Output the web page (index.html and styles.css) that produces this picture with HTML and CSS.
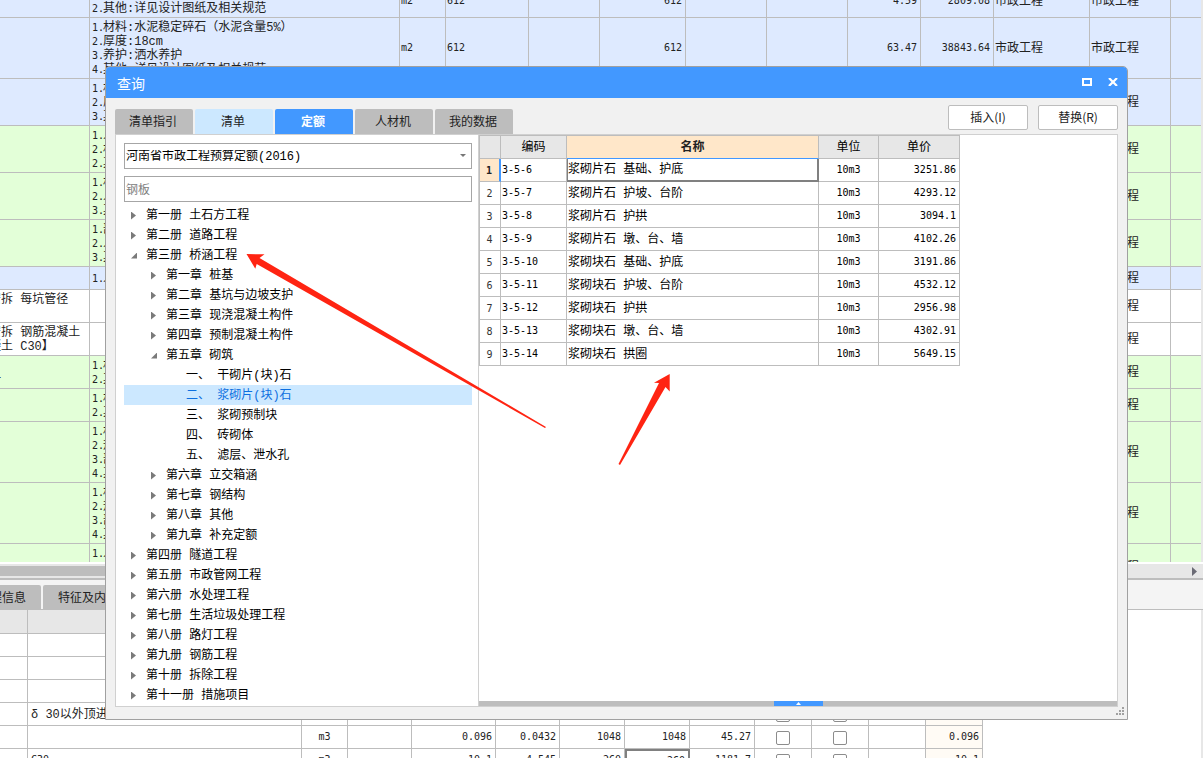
FILE: index.html
```html
<!DOCTYPE html>
<html lang="zh-CN">
<head>
<meta charset="utf-8">
<title>查询</title>
<link rel="stylesheet" href="styles.css">
</head>
<body>
<main class="app">
  <section class="bill-pane">
    <table class="grid bill">
      <colgroup><col class="w-item"><col class="w-feature"><col class="w-unit"><col class="w-83"><col class="w-71"><col class="w-86"><col class="w-81"><col class="w-81"><col class="w-73"><col class="w-73"><col class="w-96"><col class="w-81"><col></colgroup>
      <tbody>
        <tr class="h2 blue"><td></td><td><b>1.</b>厚度:沥青透层<br><b>2.</b>其他:详见设计图纸及相关规范</td><td class="num">m2</td><td class="num">612</td><td></td><td class="num right">612</td><td></td><td></td><td class="num right">4.59</td><td class="num right">2809.08</td><td>市政工程</td><td>市政工程</td><td></td></tr>
        <tr class="h4 blue"><td></td><td><b>1.</b>材料:水泥稳定碎石（水泥含量5%）<br><b>2.</b>厚度:18cm<br><b>3.</b>养护:洒水养护<br><b>4.</b>其他:详见设计图纸及相关规范</td><td class="num">m2</td><td class="num">612</td><td></td><td class="num right">612</td><td></td><td></td><td class="num right">63.47</td><td class="num right">38843.64</td><td>市政工程</td><td>市政工程</td><td></td></tr>
        <tr class="h3 blue"><td></td><td><b>1.</b>材料<br><b>2.</b>厚度<br><b>3.</b>其他</td><td colspan="9"></td><td>市政工程</td><td></td></tr>
        <tr class="h3 green"><td></td><td><b>1.</b>人工<br><b>2.</b>材料<br><b>2.</b>其他</td><td colspan="9"></td><td>市政工程</td><td></td></tr>
        <tr class="h3 green"><td></td><td><b>1.</b>材料<br><b>2.</b>人工<br><b>3.</b>其他</td><td colspan="9"></td><td>市政工程</td><td></td></tr>
        <tr class="h3 green"><td></td><td><b>1.</b>部位<br><b>2.</b>人工<br><b>3.</b>其他</td><td colspan="9"></td><td>市政工程</td><td></td></tr>
        <tr class="h1 blue"><td></td><td><b>1.</b>人工</td><td colspan="9"></td><td>市政工程</td><td></td></tr>
        <tr class="h2"><td class="top">安拆 每坑管径</td><td></td><td colspan="9"></td><td>市政工程</td><td></td></tr>
        <tr class="h2"><td>安拆 钢筋混凝土<br>凝土 C30】</td><td></td><td colspan="9"></td><td>市政工程</td><td></td></tr>
        <tr class="h2 green"><td><br>一</td><td><b>1.</b>材料<br><b>2.</b>其他</td><td colspan="9"></td><td>市政工程</td><td></td></tr>
        <tr class="h2 green"><td></td><td><b>1.</b>材料<br><b>2.</b>其他</td><td colspan="9"></td><td>市政工程</td><td></td></tr>
        <tr class="h4 green"><td></td><td><b>1.</b>材料<br><b>2.</b>规格<br><b>3.</b>部位<br><b>4.</b>其他</td><td colspan="9"></td><td>市政工程</td><td></td></tr>
        <tr class="h4 green"><td></td><td><b>1.</b>材料<br><b>2.</b>规格<br><b>3.</b>部位<br><b>4.</b>其他</td><td colspan="9"></td><td>市政工程</td><td></td></tr>
        <tr class="h3 green"><td></td><td><b>1.</b>人工<br><b>2.</b>材料<br><b>3.</b>其他</td><td colspan="9"></td><td>市政工程</td><td></td></tr>
      </tbody>
    </table>
  </section>
  <div class="hscroll">
    <div class="thumb"></div>
    <svg class="scroll-arrow" viewBox="0 0 5 9" width="5" height="9"><path d="M0 0 5 4.500 0 9Z"/></svg>
  </div>
  <nav class="detail-tabs">
    <button type="button">工程信息</button>
    <button type="button">特征及内容</button>
  </nav>
  <section class="detail-pane">
    <table class="grid detail">
      <colgroup><col class="w-28"><col class="w-274"><col class="w-unit"><col class="w-64"><col class="w-84"><col class="w-64"><col class="w-65"><col class="w-65"><col class="w-65"><col class="w-57"><col class="w-57"><col class="w-57"><col class="w-57"></colgroup>
      <thead><tr><th></th><th></th><th></th><th></th><th></th><th></th><th></th><th></th><th></th><th></th><th></th><th></th><th></th></tr></thead>
      <tbody>
        <tr><td></td><td></td><td colspan="10"></td><td class="tint"></td></tr>
        <tr><td></td><td></td><td colspan="10"></td><td class="tint"></td></tr>
        <tr><td></td><td></td><td colspan="10"></td><td class="tint"></td></tr>
        <tr><td></td><td>δ 30以外顶进后座</td><td></td><td></td><td></td><td></td><td></td><td></td><td></td><td class="mid"><input type="checkbox" aria-label="暂估"></td><td class="mid"><input type="checkbox" aria-label="锁定"></td><td></td><td class="tint"></td></tr>
        <tr><td></td><td></td><td class="num mid">m3</td><td></td><td class="num right">0.096</td><td class="num right">0.0432</td><td class="num right">1048</td><td class="num right">1048</td><td class="num right">45.27</td><td class="mid"><input type="checkbox" aria-label="暂估"></td><td class="mid"><input type="checkbox" aria-label="锁定"></td><td></td><td class="tint num right">0.096</td></tr>
        <tr><td></td><td class="num">C30</td><td class="num mid">m3</td><td></td><td class="num right">10.1</td><td class="num right">4.545</td><td class="num right">260</td><td class="num right picked">260</td><td class="num right">1181.7</td><td class="mid"><input type="checkbox" aria-label="暂估"></td><td class="mid"><input type="checkbox" aria-label="锁定"></td><td></td><td class="tint num right">10.1</td></tr>
      </tbody>
    </table>
  </section>
</main>

<section class="dialog" role="dialog" aria-labelledby="dialog-title">
  <header class="titlebar">
    <h1 id="dialog-title">查询</h1>
    <button type="button" class="win-btn" aria-label="最大化"><svg viewBox="0 0 10 8" width="10" height="8"><path d="M1 1H9V7H1Z" fill="none" stroke="#fff" stroke-width="2"/></svg></button>
    <button type="button" class="win-btn" aria-label="关闭"><svg viewBox="0 0 10 8" width="10" height="8"><path d="M1 0 9 8M9 0 1 8" stroke="#fff" stroke-width="2.200"/></svg></button>
  </header>
  <div class="toolbar">
    <nav class="tabs">
      <button type="button">清单指引</button>
      <button type="button" class="hover">清单</button>
      <button type="button" class="active">定额</button>
      <button type="button">人材机</button>
      <button type="button">我的数据</button>
    </nav>
    <div class="actions">
      <button type="button">插入(I)</button>
      <button type="button">替换(R)</button>
    </div>
  </div>
  <div class="panel">
    <aside class="browser">
      <div class="combo">
        <select class="field" aria-label="定额库"><option>河南省市政工程预算定额(2016)</option></select>
      </div>
      <input class="field search" type="text" placeholder="钢板" aria-label="搜索">
      <ul class="tree">
        <li class="shut">第一册 土石方工程</li>
        <li class="shut">第二册 道路工程</li>
        <li class="open">第三册 桥涵工程</li>
        <li class="shut l2">第一章 桩基</li>
        <li class="shut l2">第二章 基坑与边坡支护</li>
        <li class="shut l2">第三章 现浇混凝土构件</li>
        <li class="shut l2">第四章 预制混凝土构件</li>
        <li class="open l2">第五章 砌筑</li>
        <li class="l3">一、 干砌片(块)石</li>
        <li class="l3 selected">二、 浆砌片(块)石</li>
        <li class="l3">三、 浆砌预制块</li>
        <li class="l3">四、 砖砌体</li>
        <li class="l3">五、 滤层、泄水孔</li>
        <li class="shut l2">第六章 立交箱涵</li>
        <li class="shut l2">第七章 钢结构</li>
        <li class="shut l2">第八章 其他</li>
        <li class="shut l2">第九章 补充定额</li>
        <li class="shut">第四册 隧道工程</li>
        <li class="shut">第五册 市政管网工程</li>
        <li class="shut">第六册 水处理工程</li>
        <li class="shut">第七册 生活垃圾处理工程</li>
        <li class="shut">第八册 路灯工程</li>
        <li class="shut">第九册 钢筋工程</li>
        <li class="shut">第十册 拆除工程</li>
        <li class="shut">第十一册 措施项目</li>
      </ul>
    </aside>
    <div class="results">
      <div class="results-body">
        <table class="grid quota">
          <colgroup><col class="w-22"><col class="w-66"><col class="w-252"><col class="w-60"><col class="w-81"></colgroup>
          <thead><tr><th></th><th>编码</th><th class="current">名称</th><th>单位</th><th>单价</th></tr></thead>
          <tbody>
            <tr><th class="current">1</th><td class="num">3-5-6</td><td class="cell-focus">浆砌片石 基础、护底</td><td class="num mid">10m3</td><td class="num right">3251.86</td></tr>
            <tr><th>2</th><td class="num">3-5-7</td><td>浆砌片石 护坡、台阶</td><td class="num mid">10m3</td><td class="num right">4293.12</td></tr>
            <tr><th>3</th><td class="num">3-5-8</td><td>浆砌片石 护拱</td><td class="num mid">10m3</td><td class="num right">3094.1</td></tr>
            <tr><th>4</th><td class="num">3-5-9</td><td>浆砌片石 墩、台、墙</td><td class="num mid">10m3</td><td class="num right">4102.26</td></tr>
            <tr><th>5</th><td class="num">3-5-10</td><td>浆砌块石 基础、护底</td><td class="num mid">10m3</td><td class="num right">3191.86</td></tr>
            <tr><th>6</th><td class="num">3-5-11</td><td>浆砌块石 护坡、台阶</td><td class="num mid">10m3</td><td class="num right">4532.12</td></tr>
            <tr><th>7</th><td class="num">3-5-12</td><td>浆砌块石 护拱</td><td class="num mid">10m3</td><td class="num right">2956.98</td></tr>
            <tr><th>8</th><td class="num">3-5-13</td><td>浆砌块石 墩、台、墙</td><td class="num mid">10m3</td><td class="num right">4302.91</td></tr>
            <tr><th>9</th><td class="num">3-5-14</td><td>浆砌块石 拱圈</td><td class="num mid">10m3</td><td class="num right">5649.15</td></tr>
          </tbody>
        </table>
      </div>
      <div class="splitter"><button type="button" aria-label="展开"><svg viewBox="0 0 5 3" width="5" height="3"><path d="M0 3 2.500 0 5 3Z" fill="#fff"/></svg></button></div>
    </div>
  </div>
  <svg class="grip" viewBox="0 0 8 8" width="8" height="8"><path d="M6 0h2v2H6zM3 3h2v2H3zM6 3h2v2H6zM0 6h2v2H0zM3 6h2v2H3zM6 6h2v2H6z"/></svg>
</section>

<svg class="arrows" viewBox="0 0 1203 758" width="1203" height="758" aria-hidden="true">
  <path d="M246.500 254 264.500 254.300 259.500 258 546 427 545 428 256.700 264 255.300 268.700Z"/>
  <path d="M669.700 374 654 382.700 659 383 618.500 464 620 465 665.500 387 669.700 391.500Z"/>
</svg>
</body>
</html>
```

FILE: styles.css
```css
* { box-sizing: border-box; }

body {
  margin: 0;
  height: 100vh;
  overflow: hidden;
  background: #fff;
  color: #222;
  font: 12px/14px "Liberation Mono", "Noto Sans CJK SC", monospace;
}

button, input, select { font: inherit; color: inherit; }

.app {
  display: flex;
  flex-direction: column;
  height: 100vh;
  overflow: hidden;
}

/* shared grid look */
.grid {
  table-layout: fixed;
  border-collapse: separate;
  border-spacing: 0;
}
.grid td, .grid th {
  padding: 1px 1px 0;
  border-right: 1px solid #bdbdbd;
  border-bottom: 1px solid #bdbdbd;
  white-space: nowrap;
  overflow: hidden;
  font-weight: normal;
  text-align: left;
}
.grid th { background: #e7e7e7; text-align: center; padding-top: 2px; }
.grid .num, .grid b { font-family: "DejaVu Sans Mono", monospace; font-size: 10px; font-weight: normal; }
.grid .num { padding-top: 0; }
.grid .right { text-align: right; padding-right: 3px; }
.grid .mid { text-align: center; }
.grid .top { vertical-align: top; padding-top: 3px; }

.w-22 { width: 22px; }
.w-28 { width: 28px; }
.w-unit { width: 46px; }
.w-57 { width: 57px; }
.w-60 { width: 60px; }
.w-64 { width: 64px; }
.w-65 { width: 65px; }
.w-66 { width: 66px; }
.w-71 { width: 71px; }
.w-73 { width: 73px; }
.w-81 { width: 81px; }
.w-83 { width: 83px; }
.w-84 { width: 84px; }
.w-86 { width: 86px; }
.w-96 { width: 96px; }
.w-item { width: 102px; }
.w-252 { width: 252px; }
.w-274 { width: 274px; }
.w-feature { width: 310px; }

/* bill of quantities, scrolled slightly down and right */
.bill-pane {
  height: 562px;
  flex: none;
  overflow: hidden;
  border-right: 2px solid #e7e7e7;
}
.bill { width: calc(100% + 12px); margin: -15px 0 0 -12px; }
.bill td:last-child { border-right: 0; }
.h1 { height: 23px; }
.h2 { height: 33px; }
.h3 { height: 47px; }
.h4 { height: 61px; }
.blue { background: #deeaff; }
.green { background: #e3ffd8; }
.grid b { display: inline-block; width: 12px; padding-left: 1px; vertical-align: top; }

.hscroll {
  display: flex;
  align-items: center;
  justify-content: space-between;
  flex: none;
  height: 18px;
  padding-right: 6px;
  border-top: 2px solid #fff;
  border-bottom: 2px solid #bdbdbd;
  background: #e7e7e7;
}
.thumb { width: 60%; height: 10px; background: #bdbdbd; }
.scroll-arrow { fill: #6b6b75; }

.detail-tabs {
  display: flex;
  gap: 2px;
  flex: none;
  height: 30px;
  padding-top: 5px;
  background: #f4f4f4;
  border-bottom: 1px solid #bdbdbd;
}
.detail-tabs button {
  border: 0;
  background: #bdbdbd;
  border-radius: 2px 2px 0 0;
  padding: 4px 15px 0;
}
.detail-tabs button:first-child { margin-left: -37px; }

.detail-pane {
  flex: 1;
  overflow: hidden;
  border-right: 2px solid #e7e7e7;
}
.detail { width: 983px; }
.detail tr { height: 23px; }
.detail tr:first-child th { height: 24px; }
.detail td:nth-child(2) { padding-left: 3px; }
.detail .tint { background: #fffbf5; }
.detail .picked { border: 2px solid #808080; }
.detail input {
  appearance: none;
  display: block;
  width: 14px;
  height: 14px;
  margin: 0 auto;
  border: 1px solid #8c8c8c;
  border-radius: 2px;
  background: #fff;
}

/* floating query window */
.dialog {
  position: absolute;
  top: 66px;
  right: 75px;
  bottom: 38px;
  left: 105px;
  display: flex;
  flex-direction: column;
  padding: 0 9px 12px;
  border: 1px solid #a0a0a0;
  border-radius: 5px 5px 0 0;
  background: #f1f1f1;
  color: #000;
}
.titlebar {
  display: flex;
  align-items: center;
  gap: 16px;
  flex: none;
  height: 31px;
  margin: 0 -9px;
  padding: 0 9px 0 11px;
  border-radius: 4px 4px 0 0;
  background: #4298ff;
  color: #fff;
}
.titlebar h1 {
  flex: 1;
  margin: 0;
  font: 14px/20px "Noto Sans CJK SC", sans-serif;
}
.win-btn { display: flex; padding: 0 0 1px; border: 0; background: none; }

.toolbar {
  display: flex;
  justify-content: space-between;
  align-items: flex-end;
  flex: none;
  height: 36px;
}
.tabs { display: flex; gap: 2px; }
.tabs button {
  width: 78px;
  height: 25px;
  padding: 2px 2px 0 0;
  border: 0;
  border-radius: 2px 2px 0 0;
  background: #bdbdbd;
  color: #222;
}
.tabs .hover { background: #cce8ff; }
.tabs .active { background: #4298ff; color: #fff; font-weight: bold; }
.actions { display: flex; gap: 10px; padding-bottom: 4px; }
.actions button {
  width: 80px;
  height: 25px;
  padding: 0 0 1px;
  border: 1px solid #bdbdbd;
  border-radius: 2px;
  background: #fff;
  font-family: "Noto Sans CJK SC", sans-serif;
  color: #222;
}

.panel {
  display: flex;
  flex: 1;
  min-height: 0;
  border: 1px solid #d0d0d0;
  background: #fff;
}
.browser {
  display: flex;
  flex-direction: column;
  flex: none;
  width: 363px;
  padding: 8px 6px 0 8px;
  border-right: 1px solid #d0d0d0;
  overflow: hidden;
}
.field {
  width: 100%;
  height: 26px;
  padding: 2px 1px 0;
  border: 1px solid #a6a6a6;
  border-radius: 0;
  background: #fff;
  outline: 0;
}
.combo { position: relative; display: flex; margin-bottom: 7px; }
.combo select { appearance: none; }
.combo::after {
  content: "";
  position: absolute;
  top: 11px;
  right: 6px;
  border: 3px solid transparent;
  border-top-color: #777;
  border-bottom: 0;
}
.search { padding-top: 3px; }
.search::placeholder { color: #808080; opacity: 1; }

.tree { list-style: none; margin: 3px 0 0; padding: 0; }
.tree li {
  display: flex;
  align-items: center;
  height: 20px;
  padding: 1px 0 0 7px;
  white-space: pre;
}
.tree .l2 { padding-left: 27px; }
.tree .l3 { padding-left: 62px; }
.tree .selected { background: #cce8ff; color: #0c6fe0; }
.tree .shut::before, .tree .open::before {
  content: "";
  flex: none;
  width: 5px;
  height: 8px;
  margin-right: 10px;
  background: #7a7a7a;
  clip-path: polygon(0 0, 100% 50%, 0 100%);
}
.tree .open::before {
  width: 6px;
  height: 6px;
  margin-right: 9px;
  clip-path: polygon(100% 0, 100% 100%, 0 100%);
}

.results { display: flex; flex: 1; flex-direction: column; min-width: 0; }
.results-body { flex: 1; min-height: 0; overflow: hidden; }
.quota { width: 481px; border-top: 1px solid #bdbdbd; }
.quota th:first-child { border-left: 1px solid #bdbdbd; }
.quota tr { height: 23px; }
.quota tbody th { font-size: 10px; padding: 2px 1px 0 0; font-family: "DejaVu Sans Mono", monospace; color: #333; background: #fff; }
.quota .current, .quota tbody .current { background: #ffe7c9; font-weight: bold; color: #222; }
.quota thead .current { border-bottom-color: #4298ff; }
.quota tbody .current { border-right: 2px solid #4298ff; }
.quota .cell-focus { border-right: 2px solid #808080; border-bottom: 2px solid #808080; box-shadow: inset 1px 0 #808080; }

.splitter {
  display: flex;
  justify-content: center;
  flex: none;
  height: 5px;
  background: #bdbdbd;
}
.splitter button {
  display: flex;
  align-items: center;
  justify-content: center;
  width: 49px;
  padding: 0;
  border: 0;
  background: #4298ff;
}
.grip { position: absolute; right: 3px; bottom: 4px; fill: #a0a0a0; }

.arrows { position: absolute; top: 0; left: 0; fill: #ff2412; pointer-events: none; }
```
